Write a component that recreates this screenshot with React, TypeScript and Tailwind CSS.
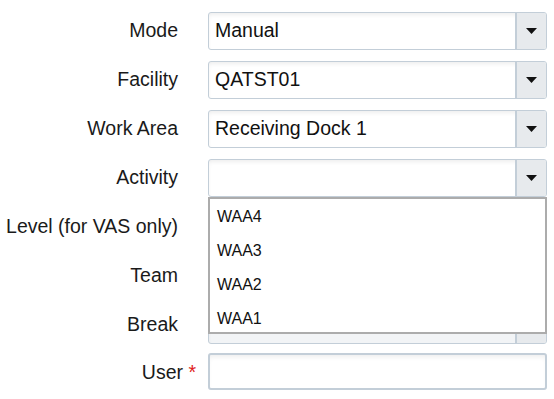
import React from "react";

const Caret = () => (
  <svg width="11" height="6" viewBox="0 0 11 6" className="block">
    <path d="M0 0 L11 0 L5.5 6 Z" fill="#111" />
  </svg>
);

const SelectBox = ({ value, disabled }: { value?: string; disabled?: boolean }) => (
  <div
    className={`flex h-[38px] w-[339px] rounded-[3px] border border-[#c3ced8] shadow-[inset_0_3px_4px_-1px_rgba(0,0,0,0.07)] ${
      disabled ? "bg-[#f2f4f6]" : "bg-white"
    }`}
  >
    <div className="flex flex-1 items-center pl-[6px] text-[19.5px] text-[#111]">{value}</div>
    <div className="flex w-[31px] items-center justify-center border-l-2 border-[#c3ced8] bg-[#e7eaed] rounded-r-[2px]">
      {!disabled && <Caret />}
    </div>
  </div>
);

const Row = ({ label, children }: { label: React.ReactNode; children: React.ReactNode }) => (
  <div className="flex items-center gap-[30px]">
    <div className="w-[178px] text-right text-[19.5px] text-[#1a1a1a]">{label}</div>
    {children}
  </div>
);

export default function App() {
  const items = ["WAA4", "WAA3", "WAA2", "WAA1"];
  return (
    <div
      className="relative h-[399px] w-[554px] bg-white pt-[12px]"
      style={{ fontFamily: '"Liberation Sans", Arial, sans-serif' }}
    >
      <div className="flex flex-col gap-[11px]">
        <Row label="Mode">
          <SelectBox value="Manual" />
        </Row>
        <Row label="Facility">
          <SelectBox value="QATST01" />
        </Row>
        <Row label="Work Area">
          <SelectBox value="Receiving Dock 1" />
        </Row>
        <Row label="Activity">
          <SelectBox />
        </Row>
        <Row label={<span className="whitespace-nowrap">Level (for VAS only)</span>}>
          <SelectBox />
        </Row>
        <Row label="Team">
          <SelectBox />
        </Row>
        <Row label="Break">
          <SelectBox disabled />
        </Row>
        <Row
          label={
            <>
              User<span className="-mr-[18px] text-[#e02020]"> *</span>
            </>
          }
        >
          <div className="-mt-[2px] h-[37px] w-[339px] rounded-[3px] border-2 border-[#c3ced8] bg-white shadow-[inset_0_4px_5px_-2px_rgba(0,0,0,0.07)]" />
        </Row>
      </div>

      {/* open activity list */}
      <div className="absolute left-[208px] top-[197px] h-[137px] w-[339px] border-2 border-[#acacac] bg-white pt-[1px]">
        {items.map((it) => (
          <div key={it} className="flex h-[34px] items-center pl-[7px] text-[16px] text-[#111]">
            {it}
          </div>
        ))}
      </div>
    </div>
  );
}
